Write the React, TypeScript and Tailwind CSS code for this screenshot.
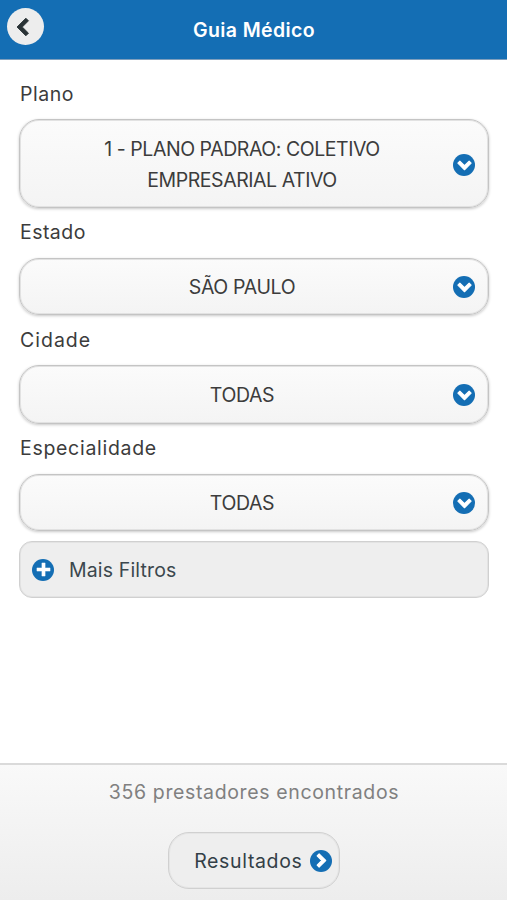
import React from 'react'

const paths = {
  down: 'M11.949 3.404 7 8.354 2.05 3.404-.071 5.525 7 12.597l7.07-7.072z',
  right: 'M3.404 2.051 8.354 7l-4.95 4.95 2.121 2.12L12.597 7 5.525-.071z',
  left: 'M10.596 11.949 5.646 7l4.95-4.95L8.475-.071 1.403 7l7.072 7.07z',
  plus: 'M14 5.3H8.7V0H5.3v5.3H0v3.4h5.3V14h3.4V8.7H14z',
}

const fields = [
  {
    label: 'Plano',
    labelStyle: 'h-[59px] pt-[19px] tracking-[0.55px]',
    boxStyle: 'h-[89px] pt-[2px] tracking-[-0.45px]',
    lines: ['1 - PLANO PADRAO: COLETIVO', 'EMPRESARIAL ATIVO'],
  },
  {
    label: 'Estado',
    labelStyle: 'h-[50px] pt-[9px] tracking-[0.45px]',
    boxStyle: 'h-[57px] tracking-[-0.35px]',
    lines: ['SÃO PAULO'],
  },
  {
    label: 'Cidade',
    labelStyle: 'h-[50px] pt-[10px] tracking-[1px]',
    boxStyle: 'h-[59px] tracking-[-0.35px]',
    lines: ['TODAS'],
  },
  {
    label: 'Especialidade',
    labelStyle: 'h-[50px] pt-[9px] tracking-[0.7px]',
    boxStyle: 'h-[57px] tracking-[-0.35px]',
    lines: ['TODAS'],
  },
]

const Disc = ({ icon }: { icon: 'down' | 'right' | 'plus' }) => (
  <span className="flex size-[22px] shrink-0 items-center justify-center rounded-full bg-[#146eb4]">
    <svg viewBox="-1 -1 16 16" className="size-[15px] fill-white stroke-white" strokeWidth={icon === 'plus' ? 0.5 : 1.2} strokeLinejoin="round">
      <path d={paths[icon]} />
    </svg>
  </span>
)

const App = () => {
  return (
    <div className="flex h-[900px] w-[507px] flex-col overflow-hidden bg-white font-['Inter',sans-serif] text-[19.5px] leading-[30px] text-[#3c3c3c]">
      <header className="flex h-[60px] shrink-0 border-b border-[#7f9fbd] bg-[#146eb4] pr-[43px] pl-[7px]">
        <button className="mt-2 flex size-[37px] shrink-0 items-center justify-center rounded-full bg-[#ededed]">
          <svg viewBox="-1 -1 16 16" className="mr-[3px] size-5 fill-[#2a3336] stroke-[#2a3336]" strokeWidth={0.7}>
            <path d={paths.left} />
          </svg>
        </button>
        <h1 className="flex-1 pt-[15px] text-center font-semibold tracking-[0.4px] text-white">
          <span>Guia Médico</span>
        </h1>
      </header>

      <main className="flex flex-1 flex-col pr-[18px] pl-[19px]">
        {fields.map((field) => (
          <div key={field.label}>
            <div className={`pl-px ${field.labelStyle}`}>
              <span>{field.label}</span>
            </div>
            <button className={`flex w-full items-center rounded-[20px] border border-[#c4c4c4] bg-linear-to-b from-[#fbfbfb] to-[#f4f4f4] pr-[13px] pl-[11px] shadow-[inset_0_0_0_1px_#e2e2e2,0_1px_3px_rgba(0,0,0,0.22)] ${field.boxStyle}`}>
              <span className="flex flex-1 flex-col items-center pt-px leading-[31px]">
                {field.lines.map((line) => (
                  <span key={line}>{line}</span>
                ))}
              </span>
              <Disc icon="down" />
            </button>
          </div>
        ))}

        <button className="mt-[10px] flex h-[57px] items-center rounded-[13px] border border-[#d0d0d0] bg-[#eeeeee] pl-3 text-[#3b474d] shadow-[inset_0_0_0_1px_#e3e3e3]">
          <Disc icon="plus" />
          <span className="ml-[15px] tracking-[0.15px]">Mais Filtros</span>
        </button>
      </main>

      <footer className="flex h-[137px] shrink-0 flex-col items-center border-t-2 border-[#dadada] bg-linear-to-b from-[#f9f9f9] to-[#ededed]">
        <p className="mt-3 pl-px tracking-[0.64px] text-[#808080]">
          <span>356 prestadores encontrados</span>
        </p>
        <button className="mt-[25px] flex h-[57px] w-[172px] items-center justify-end rounded-[21px] border border-[#d0d0d0] bg-[#eeeeee] pr-[7px] text-[#333f47] shadow-[inset_0_0_0_1px_#e5e5e5]">
          <span className="mr-[7px] tracking-[0.65px]">Resultados</span>
          <Disc icon="right" />
        </button>
      </footer>
    </div>
  )
}

export default App
